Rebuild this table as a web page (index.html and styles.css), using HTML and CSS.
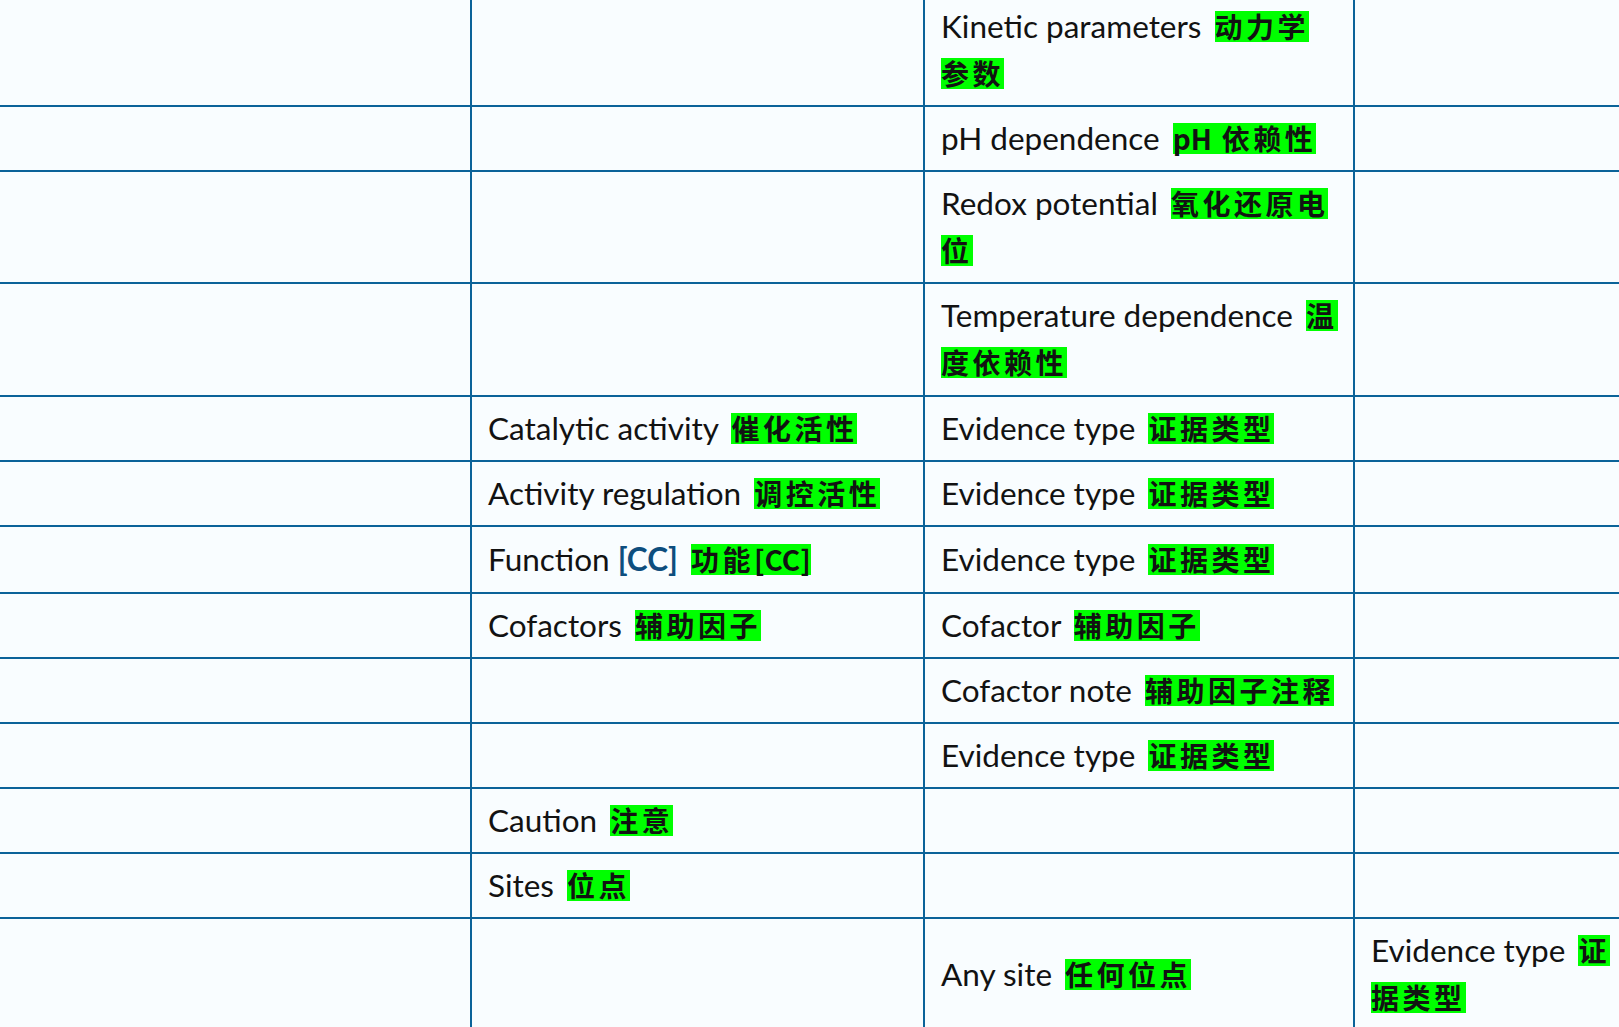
FILE: index.html
```html
<!DOCTYPE html>
<html lang="en">
<head>
<meta charset="utf-8">
<title>Function fields</title>
<link rel="stylesheet" href="styles.css">
</head>
<body>
<div class="sheet">
  <div class="row">
    <div class="cell"></div><div class="cell"></div>
    <div class="cell"><p>Kinetic parameters <span class="zh">动力学参数</span></p></div>
    <div class="cell"></div>
  </div>
  <div class="row">
    <div class="cell"></div><div class="cell"></div>
    <div class="cell"><p>pH dependence <span class="zh"><span class="lat">pH</span> 依赖性</span></p></div>
    <div class="cell"></div>
  </div>
  <div class="row">
    <div class="cell"></div><div class="cell"></div>
    <div class="cell"><p>Redox potential <span class="zh">氧化还原电位</span></p></div>
    <div class="cell"></div>
  </div>
  <div class="row loose-1">
    <div class="cell"></div><div class="cell"></div>
    <div class="cell"><p>Temperature dependence <span class="zh">温度依赖性</span></p></div>
    <div class="cell"></div>
  </div>
  <div class="row">
    <div class="cell"></div>
    <div class="cell"><p>Catalytic activity <span class="zh">催化活性</span></p></div>
    <div class="cell"><p>Evidence type <span class="zh">证据类型</span></p></div>
    <div class="cell"></div>
  </div>
  <div class="row">
    <div class="cell"></div>
    <div class="cell"><p>Activity regulation <span class="zh">调控活性</span></p></div>
    <div class="cell"><p>Evidence type <span class="zh">证据类型</span></p></div>
    <div class="cell"></div>
  </div>
  <div class="row loose-2">
    <div class="cell"></div>
    <div class="cell"><p>Function <b class="tag">[CC]</b> <span class="zh">功能<span class="lat">[CC]</span></span></p></div>
    <div class="cell"><p>Evidence type <span class="zh">证据类型</span></p></div>
    <div class="cell"></div>
  </div>
  <div class="row">
    <div class="cell"></div>
    <div class="cell"><p>Cofactors <span class="zh">辅助因子</span></p></div>
    <div class="cell"><p>Cofactor <span class="zh">辅助因子</span></p></div>
    <div class="cell"></div>
  </div>
  <div class="row">
    <div class="cell"></div><div class="cell"></div>
    <div class="cell"><p>Cofactor note <span class="zh">辅助因子注释</span></p></div>
    <div class="cell"></div>
  </div>
  <div class="row">
    <div class="cell"></div><div class="cell"></div>
    <div class="cell"><p>Evidence type <span class="zh">证据类型</span></p></div>
    <div class="cell"></div>
  </div>
  <div class="row">
    <div class="cell"></div>
    <div class="cell"><p>Caution <span class="zh">注意</span></p></div>
    <div class="cell"></div><div class="cell"></div>
  </div>
  <div class="row">
    <div class="cell"></div>
    <div class="cell"><p>Sites <span class="zh">位点</span></p></div>
    <div class="cell"></div><div class="cell"></div>
  </div>
  <div class="row">
    <div class="cell"></div><div class="cell"></div>
    <div class="cell"><p>Any site <span class="zh">任何位点</span></p></div>
    <div class="cell"><p>Evidence type <span class="zh">证据类型</span></p></div>
  </div>
</div>
</body>
</html>
```
FILE: styles.css
```css
html, body {
  margin: 0;
  padding: 0;
  overflow: hidden;
  background: #f9fdff;
}
body {
  font-family: Lato, "Noto Sans CJK SC", sans-serif;
  font-size: 31.5px;
  color: #121212;
}
.sheet {
  margin-top: -5px;
  width: 1645px;
}
.row {
  display: grid;
  grid-template-columns: 472px 453px 430px 290px;
  border-bottom: 2px solid #0b6399;
}
.cell {
  display: flex;
  align-items: center;
  border-right: 2px solid #0b6399;
  padding: 8px 15px 8px 16px;
  min-height: 47px;
}
.loose-1 .cell {
  padding-bottom: 9px;
}
.loose-2 .cell {
  padding-top: 9px;
  padding-bottom: 9px;
}
.cell p {
  margin: 0;
  line-height: 47px;
}
.tag {
  color: #0d4e7e;
  font-weight: 700;
}
.zh {
  font-family: "Noto Sans CJK SC", sans-serif;
  font-weight: 700;
  font-size: 28px;
  letter-spacing: 3.5px;
  margin-left: 5px;
  background: linear-gradient(to bottom, transparent 5px, #00ff00 5px, #00ff00 36px, transparent 36px);
}
.lat {
  letter-spacing: 0;
}
```
